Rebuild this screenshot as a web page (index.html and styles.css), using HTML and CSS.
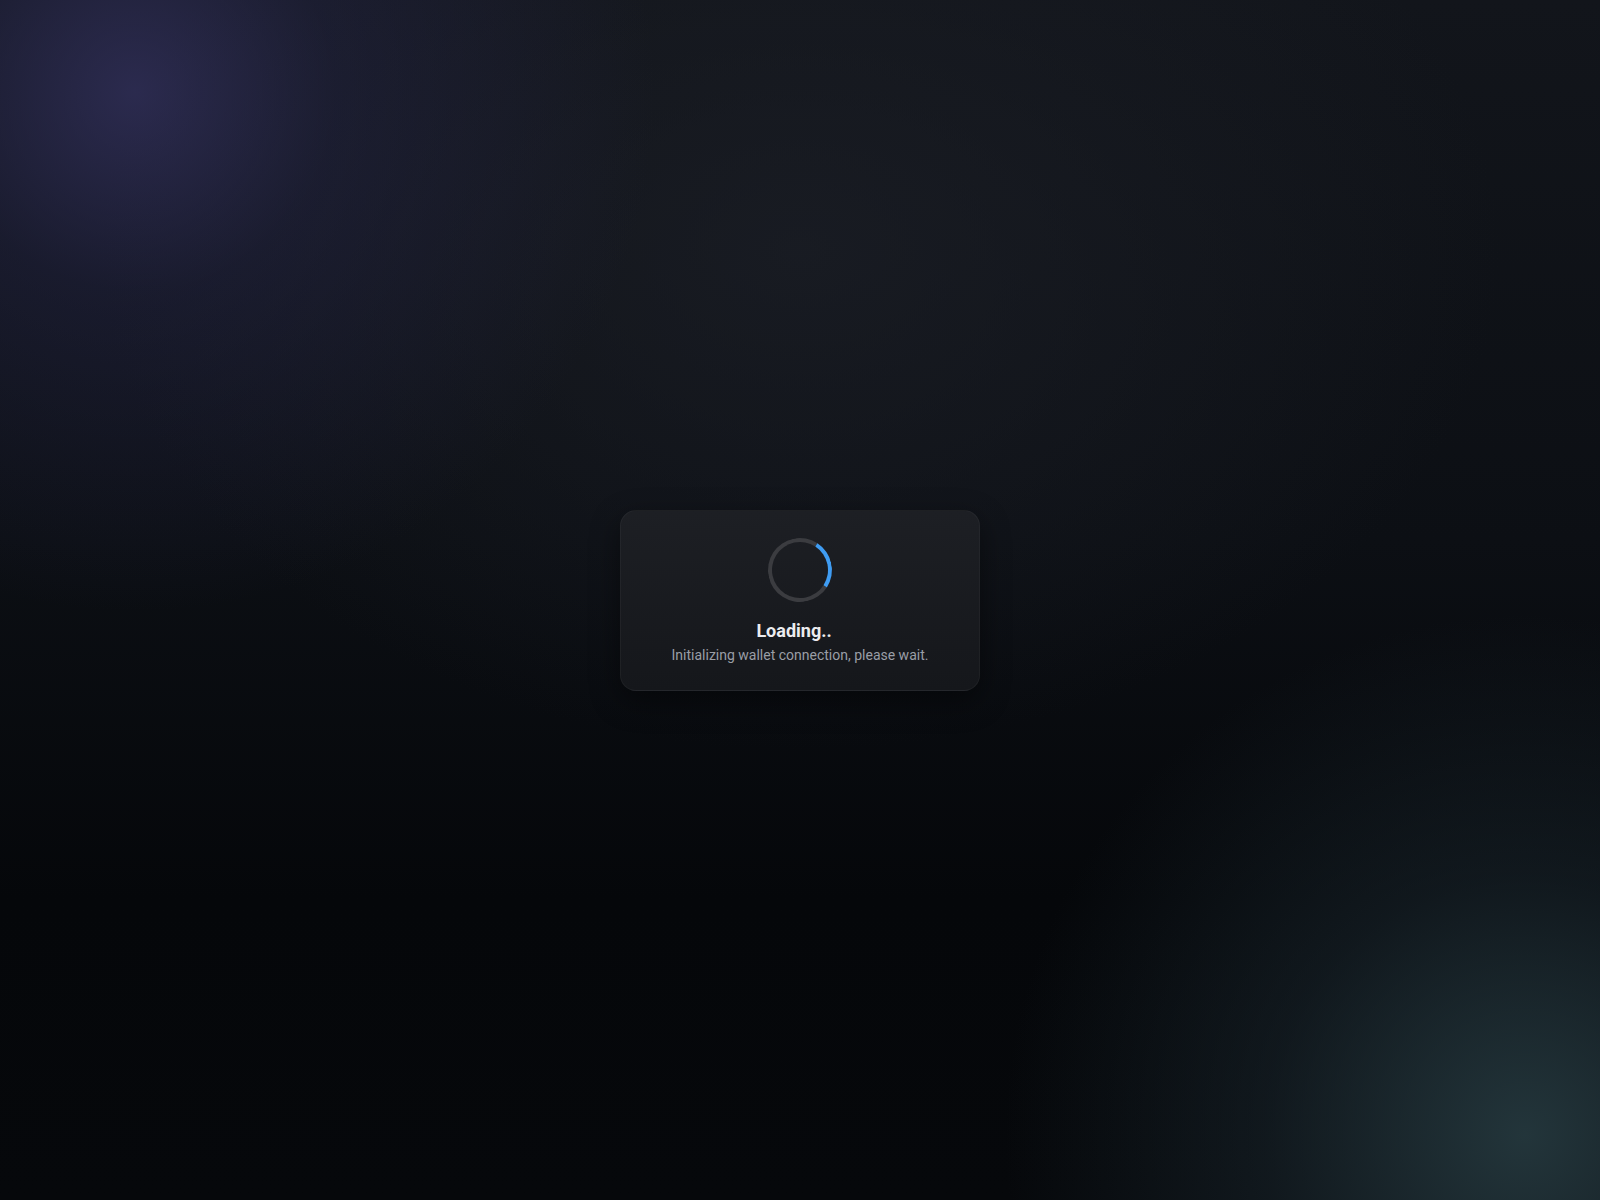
FILE: index.html
```html
<!DOCTYPE html>
<html>
<head>
	<title>Loading</title>
	<link rel="stylesheet" href="styles.css">
</head>
<body>
	<div class="loader">
		<div class="spinner"></div>
		<h2 class="loader-title">Loading..</h2>
		<p class="loader-text">Initializing wallet connection, please wait.</p>
	</div>
</body>
</html>
```
FILE: styles.css
```css
html,body{
	height:100%;
}
body{
	margin:0;
	padding:0;
	display:flex;
	align-items:center;
	justify-content:center;
	font-family: Roboto, "Liberation Sans", sans-serif;
	background-color:#090b0f;
	background-image:
		radial-gradient(circle at 135px 92px, rgba(52,50,96,0.75) 0, rgba(40,40,78,0.4) 200px, rgba(30,30,60,0) 520px),
		radial-gradient(circle at 1525px 1135px, rgba(38,58,64,0.9) 0, rgba(30,44,52,0.45) 260px, rgba(20,30,36,0) 520px),
		radial-gradient(ellipse 700px 500px at 800px 250px, rgba(28,31,39,0.7) 0, rgba(28,31,39,0) 100%),
		linear-gradient(180deg, #12151b 0%, #0c0f14 45%, #05070a 75%, #06080b 100%);
	background-repeat:no-repeat;
}
.loader{
	box-sizing:border-box;
	width:360px;
	padding:27px 24px 25px;
	display:flex;
	flex-direction:column;
	align-items:center;
	text-align:center;
	border:1px solid rgba(255,255,255,0.04);
	border-radius:16px;
	background:linear-gradient(180deg, #1d1f24 0%, #15171b 100%);
	box-shadow:0 10px 30px rgba(0,0,0,0.45);
}
.spinner{
	box-sizing:border-box;
	width:64px;
	height:64px;
	border-radius:50%;
	border:4px solid #3b3c40;
	border-right-color:#3f9cf2;
	transform:rotate(-12deg);
	margin-bottom:17px;
}
.loader-title{
	margin:0;
	padding-right:12px;
	font-size:18px;
	line-height:24px;
	font-weight:700;
	color:#ececef;
}
.loader-text{
	margin:2px 0 0;
	font-size:14px;
	line-height:20px;
	color:#9a9ea6;
}
```
